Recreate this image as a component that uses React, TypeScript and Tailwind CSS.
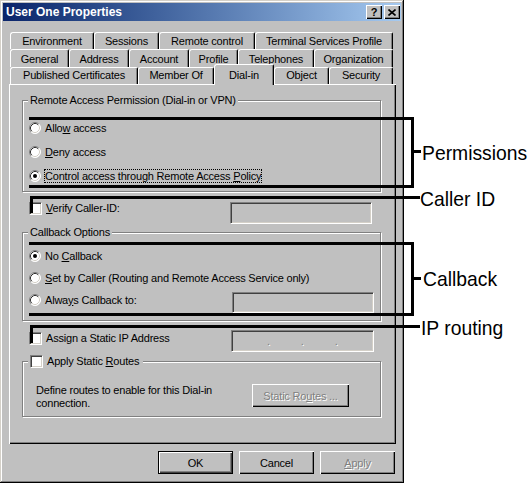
import React from "react";

type Tab = { label: string; w: string };

const row1: Tab[] = [
  { label: "Environment", w: "w-[84px]" },
  { label: "Sessions", w: "w-[65px]" },
  { label: "Remote control", w: "w-[96px]" },
  { label: "Terminal Services Profile", w: "w-[138px]" },
];
const row2: Tab[] = [
  { label: "General", w: "w-[59px]" },
  { label: "Address", w: "w-[60px]" },
  { label: "Account", w: "w-[60px]" },
  { label: "Profile", w: "w-[49px]" },
  { label: "Telephones", w: "w-[76px]" },
  { label: "Organization", w: "w-[79px]" },
];

function TabItem({ t, extra = "" }: { t: Tab; extra?: string }) {
  return (
    <div
      className={`${t.w} h-full shrink-0 flex justify-center items-center border-t border-l border-r border-t-white border-l-white border-r-black rounded-tl-[3px] rounded-tr-[2px] shadow-[inset_-1px_0_#808080] ${extra}`}
    >
      {t.label}
    </div>
  );
}

function Radio({ checked }: { checked?: boolean }) {
  return (
    <svg width="12" height="12" viewBox="0 0 12 12" className="shrink-0">
      <circle cx="6" cy="6" r="5.5" fill="#ffffff" />
      <path d="M2.11 9.89 A5.5 5.5 0 0 1 9.89 2.11" stroke="#808080" fill="none" />
      <path d="M9.89 2.11 A5.5 5.5 0 0 1 2.11 9.89" stroke="#ffffff" fill="none" />
      <path d="M2.82 9.18 A4.5 4.5 0 0 1 9.18 2.82" stroke="#303030" fill="none" />
      <path d="M9.18 2.82 A4.5 4.5 0 0 1 2.82 9.18" stroke="#d4d0c8" fill="none" />
      {checked && <circle cx="6" cy="6" r="2" fill="#000000" />}
    </svg>
  );
}

function Check() {
  return (
    <div className="w-[13px] h-[13px] shrink-0 bg-white border border-t-[#808080] border-l-[#808080] border-r-white border-b-white shadow-[inset_1px_1px_#404040,inset_-1px_-1px_#d4d0c8]" />
  );
}

function Field({ cls, children }: { cls: string; children?: React.ReactNode }) {
  return (
    <div
      className={`shrink-0 bg-[#c0c0c0] border border-t-[#808080] border-l-[#808080] border-r-white border-b-white shadow-[inset_1px_1px_#404040,inset_-1px_-1px_#d4d0c8] ${cls}`}
    >
      {children}
    </div>
  );
}

function Btn({
  children,
  cls = "",
  def,
}: {
  children: React.ReactNode;
  cls?: string;
  def?: boolean;
}) {
  return (
    <div
      className={`shrink-0 bg-[#c0c0c0] flex items-center justify-center ${
        def
          ? "border border-black shadow-[inset_1px_1px_#fff,inset_-1px_-1px_#404040,inset_-2px_-2px_#808080]"
          : "shadow-[inset_1px_1px_#fff,inset_-1px_-1px_#000,inset_-2px_-2px_#808080]"
      } ${cls}`}
    >
      {children}
    </div>
  );
}

function Group({
  label,
  cls,
  children,
}: {
  label: React.ReactNode;
  cls: string;
  children?: React.ReactNode;
}) {
  return (
    <div
      className={`relative w-[359px] shrink-0 border border-[#808080] shadow-[inset_1px_1px_#fff,1px_1px_#fff] ${cls}`}
    >
      <div className="absolute left-[5px] top-[-8px] bg-[#c0c0c0] px-[2px] leading-[14px] flex items-center">
        {label}
      </div>
      {children}
    </div>
  );
}

const dis = "text-[#808080] [text-shadow:1px_1px_0_#fff]";

export default function App() {
  return (
    <div className="relative w-[530px] h-[484px] bg-white overflow-hidden font-['Liberation_Sans',Arial,sans-serif] text-[11px] tracking-[-0.2px] leading-[14px] text-black">
      {/* Dialog window */}
      <div className="w-[404px] h-[483px] bg-[#c0c0c0] p-[3px] flex flex-col shadow-[inset_-1px_-1px_#000,inset_1px_1px_#d4d0c8,inset_-2px_-2px_#808080,inset_2px_2px_#fff]">
        {/* Title bar */}
        <div className="h-[18px] shrink-0 flex items-center bg-linear-to-r from-[#0a246a] to-[#a6caf0] pl-[3px] pr-[1px]">
          <span className="flex-1 text-white font-bold text-[12px] tracking-normal">User One Properties</span>
          <Btn cls="w-[16px] h-[14px]">
            <span className="font-bold text-[11px] leading-none tracking-normal">?</span>
          </Btn>
          <Btn cls="w-[16px] h-[14px] ml-[2px]">
            <svg width="8" height="7" viewBox="0 0 8 7">
              <path d="M0.5 0.5 L7.5 6.5 M7.5 0.5 L0.5 6.5" stroke="#000" strokeWidth="1.6" />
            </svg>
          </Btn>
        </div>

        {/* Tabs + page */}
        <div className="mt-[10px] ml-[6px] w-[387px] flex flex-col">
          <div className="h-[18px] flex pl-[1px] pt-[1px]">
            {row1.map((t) => (
              <TabItem key={t.label} t={t} />
            ))}
          </div>
          <div className="h-[18px] flex pl-[1px]">
            {row2.map((t) => (
              <TabItem key={t.label} t={t} />
            ))}
          </div>
          <div className="h-[17px] flex pl-[1px] items-start">
            <TabItem t={{ label: "Published Certificates", w: "w-[128px]" }} extra="pb-[2px]" />
            <TabItem t={{ label: "Member Of", w: "w-[76px]" }} extra="pb-[2px]" />
            <div className="relative z-10 w-[60px] h-[21px] mt-[-3px] shrink-0 bg-[#c0c0c0] flex justify-center pt-[3px] border-t border-l border-r border-t-white border-l-white border-r-black rounded-tl-[3px] rounded-tr-[2px] shadow-[inset_-1px_0_#808080]">
              Dial-in
            </div>
            <TabItem t={{ label: "Object", w: "w-[55px]" }} extra="pb-[2px]" />
            <TabItem t={{ label: "Security", w: "w-[64px]" }} extra="pb-[2px]" />
          </div>

          {/* Page */}
          <div className="h-[360px] w-[387px] flex flex-col pl-[13px] pt-[16px] shadow-[inset_1px_1px_#fff,inset_-1px_-1px_#000,inset_-2px_-2px_#808080]">
            <Group label="Remote Access Permission (Dial-in or VPN)" cls="h-[92px]">
              <div className="flex flex-col pt-[20px] pl-[6px] gap-[10px]">
                <div className="h-[14px] flex items-center gap-[4px]">
                  <Radio />
                  <span>
                    Allo<u className="underline">w</u> access
                  </span>
                </div>
                <div className="h-[14px] flex items-center gap-[4px]">
                  <Radio />
                  <span>
                    <u className="underline">D</u>eny access
                  </span>
                </div>
                <div className="h-[14px] flex items-center gap-[3px]">
                  <Radio checked />
                  <span className="border border-dotted border-black leading-[12px]">
                    Control access through Remote Access <u className="underline">P</u>olicy
                  </span>
                </div>
              </div>
            </Group>

            <div className="mt-[9px] h-[23px] w-[359px] flex items-start">
              <div className="flex items-center gap-[4px] pl-[7px]">
                <Check />
                <span>
                  <u className="underline">V</u>erify Caller-ID:
                </span>
              </div>
              <Field cls="ml-auto mr-[9px] mt-[1px] w-[142px] h-[22px]" />
            </div>

            <Group label="Callback Options" cls="mt-[8px] h-[89px]">
              <div className="flex flex-col pt-[16px] pl-[6px] gap-[8px]">
                <div className="h-[14px] flex items-center gap-[4px]">
                  <Radio checked />
                  <span>
                    No <u className="underline">C</u>allback
                  </span>
                </div>
                <div className="h-[14px] flex items-center gap-[4px]">
                  <Radio />
                  <span>
                    <u className="underline">S</u>et by Caller (Routing and Remote Access Service only)
                  </span>
                </div>
                <div className="h-[14px] flex items-center gap-[4px]">
                  <Radio />
                  <span>
                    Alwa<u className="underline">y</u>s Callback to:
                  </span>
                  <Field cls="self-start mt-[-1px] ml-auto mr-[6px] w-[142px] h-[21px]" />
                </div>
              </div>
            </Group>

            <div className="mt-[9px] h-[23px] w-[359px] flex items-start">
              <div className="flex items-center gap-[4px] pl-[7px] mt-[1px]">
                <Check />
                <span>Assign a Static IP Address</span>
              </div>
              <Field cls="ml-auto mr-[7px] w-[143px] h-[22px] flex items-center pl-[35px] gap-[31px]">
                <span className={`${dis} leading-none`}>.</span>
                <span className={`${dis} leading-none`}>.</span>
                <span className={`${dis} leading-none`}>.</span>
              </Field>
            </div>

            <Group
              cls="mt-[8px] h-[56px]"
              label={
                <span className="flex items-center gap-[4px] pr-[2px]">
                  <Check />
                  <span>
                    Apply Static <u className="underline">R</u>outes
                  </span>
                </span>
              }
            >
              <div className="flex pt-[22px] pl-[13px]">
                <div className="w-[216px] leading-[13px]">
                  Define routes to enable for this Dial-in connection.
                </div>
                <Btn cls="w-[97px] h-[23px]">
                  <span className={dis}>
                    Static Ro<u className="underline">u</u>tes ...
                  </span>
                </Btn>
              </div>
            </Group>
          </div>

          {/* Dialog buttons */}
          <div className="mt-[7px] flex justify-end gap-[6px] pr-[1px]">
            <Btn def cls="w-[75px] h-[23px]">
              OK
            </Btn>
            <Btn cls="w-[75px] h-[23px]">Cancel</Btn>
            <Btn cls="w-[75px] h-[23px]">
              <span className={dis}>
                <u className="underline">A</u>pply
              </span>
            </Btn>
          </div>
        </div>
      </div>

      {/* Annotation overlay: Permissions */}
      <div className="absolute bg-black left-[29px] top-[117px] w-[385px] h-[3px]" />
      <div className="absolute bg-black left-[29px] top-[185px] w-[385px] h-[3px]" />
      <div className="absolute bg-black left-[411px] top-[117px] w-[3px] h-[71px]" />
      <div className="absolute bg-black left-[414px] top-[150px] w-[7px] h-[3px]" />
      <div className="absolute left-[422px] top-[152px] -translate-y-1/2 origin-left scale-x-[0.92] text-[21px] leading-none tracking-normal whitespace-nowrap">
        Permissions
      </div>

      {/* Caller ID */}
      <div className="absolute bg-black left-[30px] top-[196px] w-[390px] h-[3px]" />
      <div className="absolute bg-black left-[30px] top-[196px] w-[3px] h-[17px]" />
      <div className="absolute left-[420px] top-[198px] -translate-y-1/2 origin-left scale-x-[0.92] text-[21px] leading-none tracking-normal whitespace-nowrap">
        Caller ID
      </div>

      {/* Callback */}
      <div className="absolute bg-black left-[29px] top-[242px] w-[385px] h-[3px]" />
      <div className="absolute bg-black left-[29px] top-[313px] w-[385px] h-[3px]" />
      <div className="absolute bg-black left-[411px] top-[242px] w-[3px] h-[74px]" />
      <div className="absolute bg-black left-[414px] top-[277px] w-[7px] h-[3px]" />
      <div className="absolute left-[423px] top-[278px] -translate-y-1/2 origin-left scale-x-[0.92] text-[21px] leading-none tracking-normal whitespace-nowrap">
        Callback
      </div>

      {/* IP routing */}
      <div className="absolute bg-black left-[30px] top-[325px] w-[390px] h-[3px]" />
      <div className="absolute bg-black left-[30px] top-[325px] w-[3px] h-[18px]" />
      <div className="absolute left-[421px] top-[327px] -translate-y-1/2 origin-left scale-x-[0.92] text-[21px] leading-none tracking-normal whitespace-nowrap">
        IP routing
      </div>
    </div>
  );
}
